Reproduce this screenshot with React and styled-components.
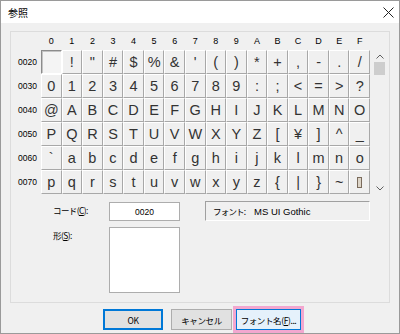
import React from 'react';
import styled, { createGlobalStyle, css } from 'styled-components';

const GlobalStyle = createGlobalStyle`
  html, body {
    margin: 0;
    padding: 0;
    background: #fff;
  }
  body {
    font-family: "Liberation Sans", "Noto Sans CJK JP", sans-serif;
  }
  * {
    box-sizing: border-box;
  }
`;

const COLS = ['0', '1', '2', '3', '4', '5', '6', '7', '8', '9', 'A', 'B', 'C', 'D', 'E', 'F'];

const ROWS = [
  { code: '0020', chars: [' ', '!', '"', '#', '$', '%', '&', "'", '(', ')', '*', '+', ',', '-', '.', '/'] },
  { code: '0030', chars: ['0', '1', '2', '3', '4', '5', '6', '7', '8', '9', ':', ';', '<', '=', '>', '?'] },
  { code: '0040', chars: ['@', 'A', 'B', 'C', 'D', 'E', 'F', 'G', 'H', 'I', 'J', 'K', 'L', 'M', 'N', 'O'] },
  { code: '0050', chars: ['P', 'Q', 'R', 'S', 'T', 'U', 'V', 'W', 'X', 'Y', 'Z', '[', '¥', ']', '^', '_'] },
  { code: '0060', chars: ['`', 'a', 'b', 'c', 'd', 'e', 'f', 'g', 'h', 'i', 'j', 'k', 'l', 'm', 'n', 'o'] },
  { code: '0070', chars: ['p', 'q', 'r', 's', 't', 'u', 'v', 'w', 'x', 'y', 'z', '{', '|', '}', '~', null] },
];

const Window = styled.div`
  width: 400px;
  height: 334px;
  border: 1px solid #9a9a9a;
  background: #f0f0f0;
  display: flex;
  flex-direction: column;
`;

const TitleBar = styled.div`
  height: 22px;
  background: #fff;
  display: flex;
  align-items: center;
  justify-content: space-between;
  padding: 0 5px 0 7px;
`;

const Title = styled.span`
  font-family: "Noto Sans CJK JP", sans-serif;
  font-size: 10px;
  color: #000;
`;

const CloseButton = styled.div`
  width: 12px;
  height: 12px;
  display: flex;
  align-items: center;
  justify-content: center;
`;

const Body = styled.div`
  flex: 1;
  padding: 8px 9px 0 9px;
  display: flex;
  flex-direction: column;
`;

const Panel = styled.div`
  height: 272px;
  border: 1px solid #dcdcdc;
  display: flex;
  flex-direction: column;
`;

const CharArea = styled.div`
  display: flex;
  align-items: flex-start;
`;

const Table = styled.div`
  width: 359px;
  display: grid;
  grid-template-columns: 30px repeat(16, 1fr);
  grid-template-rows: 18px repeat(6, 24px);
`;

const ColHead = styled.div`
  display: flex;
  align-items: center;
  justify-content: center;
  font-size: 9px;
  color: #000;
`;

const RowHead = styled.div`
  display: flex;
  align-items: center;
  justify-content: center;
  padding-left: 3px;
  font-size: 8.5px;
  color: #000;
`;

const Cell = styled.div`
  display: flex;
  align-items: center;
  justify-content: center;
  border: 1px solid;
  border-color: #fff #a8a8a8 #a8a8a8 #fff;
  font-size: 14.5px;
  color: #333;
  ${(p) =>
    p.$selected &&
    css`
      border-color: #8c8c8c #fff #fff #8c8c8c;
      background: #f4f4f4;
      box-shadow: inset 1px 1px 0 #c4c4c4;
    `}
`;

const DelGlyph = styled.span`
  width: 5px;
  height: 11px;
  border: 1px solid #7a6b5c;
  background: #ddd5c8;
`;

const ScrollBar = styled.div`
  width: 15px;
  height: 162px;
  margin-left: 2px;
  padding-top: 18px;
  display: flex;
  flex-direction: column;
  align-items: center;
`;

const ArrowButton = styled.div`
  height: 12px;
  width: 100%;
  display: flex;
  align-items: center;
  justify-content: center;
`;

const Thumb = styled.div`
  width: 11px;
  height: 13px;
  background: #cdcdcd;
`;

const Track = styled.div`
  flex: 1;
`;

const Lower = styled.div`
  margin-top: 7px;
  padding-left: 42px;
  display: grid;
  grid-template-columns: 56px 71px 25px 165px;
  grid-template-rows: 20px 66px;
  row-gap: 6px;
`;

const Label = styled.div`
  font-family: "Noto Sans CJK JP", sans-serif;
  font-size: 8.5px;
  letter-spacing: -0.6px;
  color: #000;
  padding-top: ${(p) => p.$top || 0}px;
  u {
    text-decoration-thickness: 1px;
  }
`;

const CodeInput = styled.div`
  height: 19px;
  margin-top: 1px;
  background: #fff;
  border: 1px solid #adadad;
  display: flex;
  align-items: center;
  justify-content: center;
  font-size: 8.5px;
  color: #000;
`;

const FontBox = styled.div`
  grid-column: 4;
  height: 20px;
  border: 1px solid;
  border-color: #a0a0a0 #fff #fff #a0a0a0;
  display: flex;
  align-items: center;
  padding-left: 7px;
  font-size: 9.5px;
  color: #000;
  white-space: nowrap;
`;

const FontLabel = styled.span`
  display: block;
  font-family: "Noto Sans CJK JP", sans-serif;
  font-size: 8.5px;
  letter-spacing: -0.8px;
  width: 41px;
  flex-shrink: 0;
`;

const ShapeBox = styled.div`
  grid-column: 2;
  background: #fff;
  border: 1px solid #adadad;
`;

const ButtonRow = styled.div`
  display: flex;
  gap: 8px;
  padding: 6px 0 0 93px;
`;

const Button = styled.div`
  width: ${(p) => p.$w}px;
  height: 21px;
  display: flex;
  align-items: center;
  justify-content: center;
  background: ${(p) => (p.$hot ? '#e5f1fb' : '#e1e1e1')};
  border: 1px solid ${(p) => (p.$primary || p.$hot ? '#0078d7' : '#adadad')};
  ${(p) => p.$primary && css`box-shadow: inset 0 0 0 1px #0078d7;`}
  ${(p) =>
    p.$hot &&
    css`
      outline: 3px solid #f2a7cf;
      outline-offset: 0;
      margin-left: -4px;
    `}
  font-family: "Noto Sans CJK JP", sans-serif;
  font-size: 8.5px;
  letter-spacing: -0.4px;
  color: #000;
  white-space: nowrap;
`;

const Chevron = ({ up }) => (
  <svg width="8" height="5" viewBox="0 0 8 5">
    <path d={up ? 'M0.5 4.5 L4 1 L7.5 4.5' : 'M0.5 0.5 L4 4 L7.5 0.5'} fill="none" stroke="#606060" strokeWidth="1" />
  </svg>
);

export default function App() {
  return (
    <>
      <GlobalStyle />
      <Window>
        <TitleBar>
          <Title>参照</Title>
          <CloseButton>
            <svg width="11" height="11" viewBox="0 0 11 11">
              <path d="M0.5 0.5 L10.5 10.5 M10.5 0.5 L0.5 10.5" stroke="#222" strokeWidth="1" />
            </svg>
          </CloseButton>
        </TitleBar>
        <Body>
          <Panel>
            <CharArea>
              <Table>
                <div />
                {COLS.map((c) => (
                  <ColHead key={c}>{c}</ColHead>
                ))}
                {ROWS.map((row) => (
                  <React.Fragment key={row.code}>
                    <RowHead>{row.code}</RowHead>
                    {row.chars.map((ch, i) => (
                      <Cell key={i} $selected={row.code === '0020' && i === 0}>
                        {ch === null ? <DelGlyph /> : ch}
                      </Cell>
                    ))}
                  </React.Fragment>
                ))}
              </Table>
              <ScrollBar>
                <ArrowButton>
                  <Chevron up />
                </ArrowButton>
                <Thumb />
                <Track />
                <ArrowButton>
                  <Chevron />
                </ArrowButton>
              </ScrollBar>
            </CharArea>
            <Lower>
              <Label $top={3}>
                コード(<u>C</u>):
              </Label>
              <CodeInput>0020</CodeInput>
              <div />
              <FontBox>
                <FontLabel>フォント:</FontLabel>
                <span>MS UI Gothic</span>
              </FontBox>
              <Label $top={2}>
                形(<u>S</u>):
              </Label>
              <ShapeBox />
            </Lower>
          </Panel>
          <ButtonRow>
            <Button $w={60} $primary>OK</Button>
            <Button $w={61}>キャンセル</Button>
            <Button $w={65} $hot>
              フォント名(<u>F</u>)...
            </Button>
          </ButtonRow>
        </Body>
      </Window>
    </>
  );
}
